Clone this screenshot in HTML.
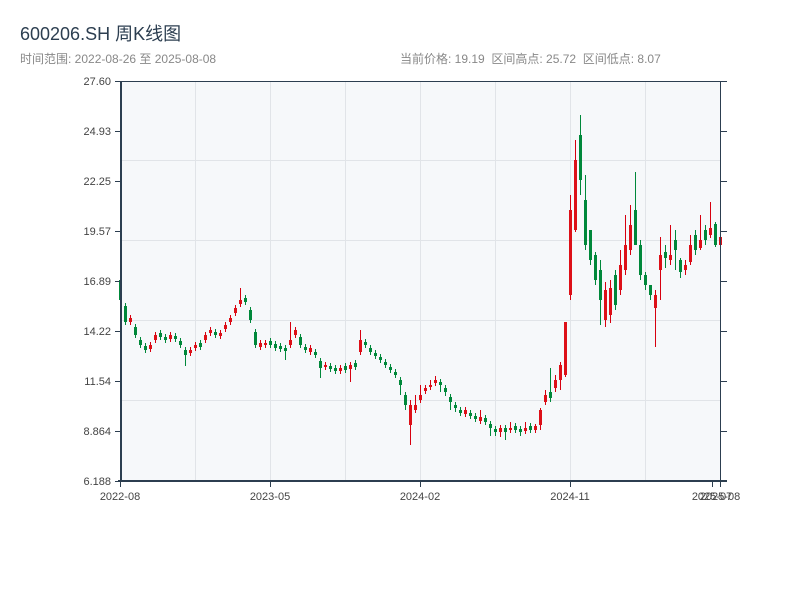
<!DOCTYPE html>
<html><head><meta charset="utf-8"><style>
body{margin:0;background:#fff;width:800px;height:600px;overflow:hidden;font-family:"Liberation Sans","Noto Sans CJK SC",sans-serif}
</style></head><body>
<svg width="800" height="600" xmlns="http://www.w3.org/2000/svg" font-family="Liberation Sans, Noto Sans CJK SC, sans-serif">
<text x="20" y="40" font-size="18" fill="#2c3e50">600206.SH 周K线图</text>
<text x="20" y="63" font-size="12" fill="#888">时间范围: 2022-08-26 至 2025-08-08</text>
<text x="400" y="63" font-size="12" fill="#888" xml:space="preserve">当前价格: 19.19  区间高点: 25.72  区间低点: 8.07</text>
<rect x="121" y="81" width="600" height="400" fill="#f6f8fa"/>
<g stroke="#e1e4e8" stroke-width="1">
<line x1="195.5" y1="81" x2="195.5" y2="481"/><line x1="270.5" y1="81" x2="270.5" y2="481"/><line x1="345.5" y1="81" x2="345.5" y2="481"/><line x1="420.5" y1="81" x2="420.5" y2="481"/><line x1="495.5" y1="81" x2="495.5" y2="481"/><line x1="570.5" y1="81" x2="570.5" y2="481"/><line x1="645.5" y1="81" x2="645.5" y2="481"/>
<line x1="121" y1="160.5" x2="721" y2="160.5"/><line x1="121" y1="240.5" x2="721" y2="240.5"/><line x1="121" y1="320.5" x2="721" y2="320.5"/><line x1="121" y1="400.5" x2="721" y2="400.5"/>
</g>
<!-- green wicks -->
<path stroke="#00883a" stroke-width="1" fill="none" d="M120.5 265V315M125.5 303V325M135.5 324V338M140.5 337V348M145.5 343V353M160.5 330V340M165.5 334V343M175.5 333V342M180.5 338V348M185.5 347V366M200.5 340V350M215.5 329V338M245.5 295V305M250.5 307V323M255.5 329V348M270.5 338V348M275.5 341V351M280.5 343V352M285.5 345V360M300.5 334V348M305.5 344V353M315.5 349V358M320.5 358V378M330.5 363V372M335.5 365V374M345.5 363V373M355.5 360V370M365.5 339V348M370.5 345V355M375.5 350V359M380.5 354V363M385.5 359V368M390.5 364V373M395.5 369V378M400.5 377V395M405.5 392V410M440.5 379V392M445.5 385V396M450.5 394V410M455.5 402V412M460.5 407V416M470.5 410V419M475.5 413V422M485.5 415V425M490.5 421V436M495.5 426V436M505.5 425V440M515.5 423V433M520.5 426V436M530.5 423V433M550.5 368V402M580.5 115V195M585.5 175V250M590.5 230V265M595.5 252V285M600.5 260V325M615.5 270V310M635.5 172V245M640.5 240V280M645.5 272V290M650.5 285V300M665.5 245V268M675.5 230V270M680.5 258V278M695.5 230V255M705.5 225V245M715.5 222V247"/>
<path stroke="#00883a" stroke-width="3" fill="none" d="M120.5 280V300M125.5 306V322M135.5 327V335M140.5 340V345M145.5 346V350M160.5 333V337M165.5 337V340M175.5 336V339M180.5 341V345M185.5 350V355M200.5 343V347M215.5 332V335M245.5 298V302M250.5 310V320M255.5 332V345M270.5 341V345M275.5 344V348M280.5 346V349M285.5 348V351M300.5 337V345M305.5 347V350M315.5 352V355M320.5 361V368M330.5 366V369M335.5 368V371M345.5 366V370M355.5 363V367M365.5 342V345M370.5 348V352M375.5 353V356M380.5 357V360M385.5 362V365M390.5 367V370M395.5 372V375M400.5 380V385M405.5 395V405M440.5 382V385M445.5 388V392M450.5 397V402M455.5 405V408M460.5 410V413M470.5 413V416M475.5 416V419M485.5 418V422M490.5 424V428M495.5 429V432M505.5 428V432M515.5 426V430M520.5 429V432M530.5 426V430M550.5 392V398M580.5 135V180M585.5 200V245M590.5 230V260M595.5 255V280M600.5 270V300M615.5 275V305M635.5 210V245M640.5 245V275M645.5 275V285M650.5 285V295M665.5 252V258M675.5 240V250M680.5 260V272M695.5 235V250M705.5 230V240M715.5 224V245"/>
<!-- red wicks -->
<path stroke="#d7000f" stroke-width="1" fill="none" d="M130.5 315V325M150.5 342V352M155.5 332V343M170.5 332V342M190.5 347V356M195.5 342V351M205.5 332V343M210.5 327V336M220.5 330V339M225.5 322V332M230.5 315V325M235.5 305V316M240.5 288V307M260.5 340V350M265.5 340V348M290.5 322V348M295.5 327V338M310.5 345V355M325.5 362V370M340.5 365V374M350.5 362V382M360.5 330V355M410.5 400V445M415.5 395V413M420.5 385V403M425.5 385V394M430.5 380V390M435.5 376V386M465.5 407V417M480.5 410V424M500.5 425V437M510.5 422V433M525.5 422V434M535.5 424V433M540.5 408V430M545.5 390V405M555.5 375V392M560.5 362V390M565.5 322V377M570.5 195V300M575.5 140V232M605.5 282V327M610.5 280V323M620.5 250V295M625.5 215V275M630.5 205V255M655.5 290V347M660.5 237V300M670.5 225V265M685.5 260V275M690.5 235V265M700.5 215V250M710.5 202V238M720.5 225V247"/>
<path stroke="#dd1018" stroke-width="3" fill="none" d="M130.5 318V322M150.5 345V349M155.5 335V340M170.5 335V339M190.5 350V353M195.5 345V348M205.5 335V340M210.5 330V333M220.5 333V336M225.5 325V329M230.5 318V322M235.5 308V313M240.5 300V304M260.5 343V347M265.5 343V345M290.5 340V345M295.5 330V335M310.5 348V352M325.5 365V367M340.5 368V371M350.5 365V369M360.5 340V352M410.5 405V425M415.5 405V410M420.5 395V400M425.5 388V391M430.5 385V387M435.5 380V383M465.5 410V414M480.5 417V421M500.5 428V432M510.5 428V430M525.5 428V431M535.5 426V430M540.5 410V425M545.5 395V402M555.5 380V388M560.5 365V380M565.5 322V375M570.5 210V295M575.5 160V230M605.5 290V320M610.5 288V315M620.5 265V290M625.5 245V270M630.5 225V250M655.5 295V308M660.5 255V270M670.5 255V260M685.5 265V270M690.5 245V262M700.5 240V248M710.5 228V235M720.5 237V245"/>
<g stroke="#2c3e50" stroke-width="1">
<line x1="118" y1="81.5" x2="727" y2="81.5"/>
<line x1="121" y1="81" x2="121" y2="482" stroke-width="2"/>
<line x1="720.5" y1="81" x2="720.5" y2="481"/>
<line x1="118" y1="481" x2="727" y2="481" stroke-width="2"/>
<path d="M115 81.5H121M115 131.5H121M115 181.5H121M115 231.5H121M115 281.5H121M115 331.5H121M115 381.5H121M115 431.5H121M115 481.5H121M721 81.5H727M721 131.5H727M721 181.5H727M721 231.5H727M721 281.5H727M721 331.5H727M721 381.5H727M721 431.5H727M721 481.5H727M120.5 481V487M270.5 481V487M420.5 481V487M570.5 481V487M712.5 481V487M720.5 481V487"/>
</g>
<g font-size="11" fill="#444" text-anchor="end">
<text x="111" y="85">27.60</text><text x="111" y="135">24.93</text><text x="111" y="185">22.25</text><text x="111" y="235">19.57</text><text x="111" y="285">16.89</text><text x="111" y="335">14.22</text><text x="111" y="385">11.54</text><text x="111" y="435">8.864</text><text x="111" y="485">6.188</text>
</g>
<g font-size="11" fill="#444" text-anchor="middle">
<text x="120" y="500">2022-08</text><text x="270" y="500">2023-05</text><text x="420" y="500">2024-02</text><text x="570" y="500">2024-11</text><text x="712" y="500">2025-07</text><text x="720" y="500">2025-08</text>
</g>
</svg>
</body></html>
